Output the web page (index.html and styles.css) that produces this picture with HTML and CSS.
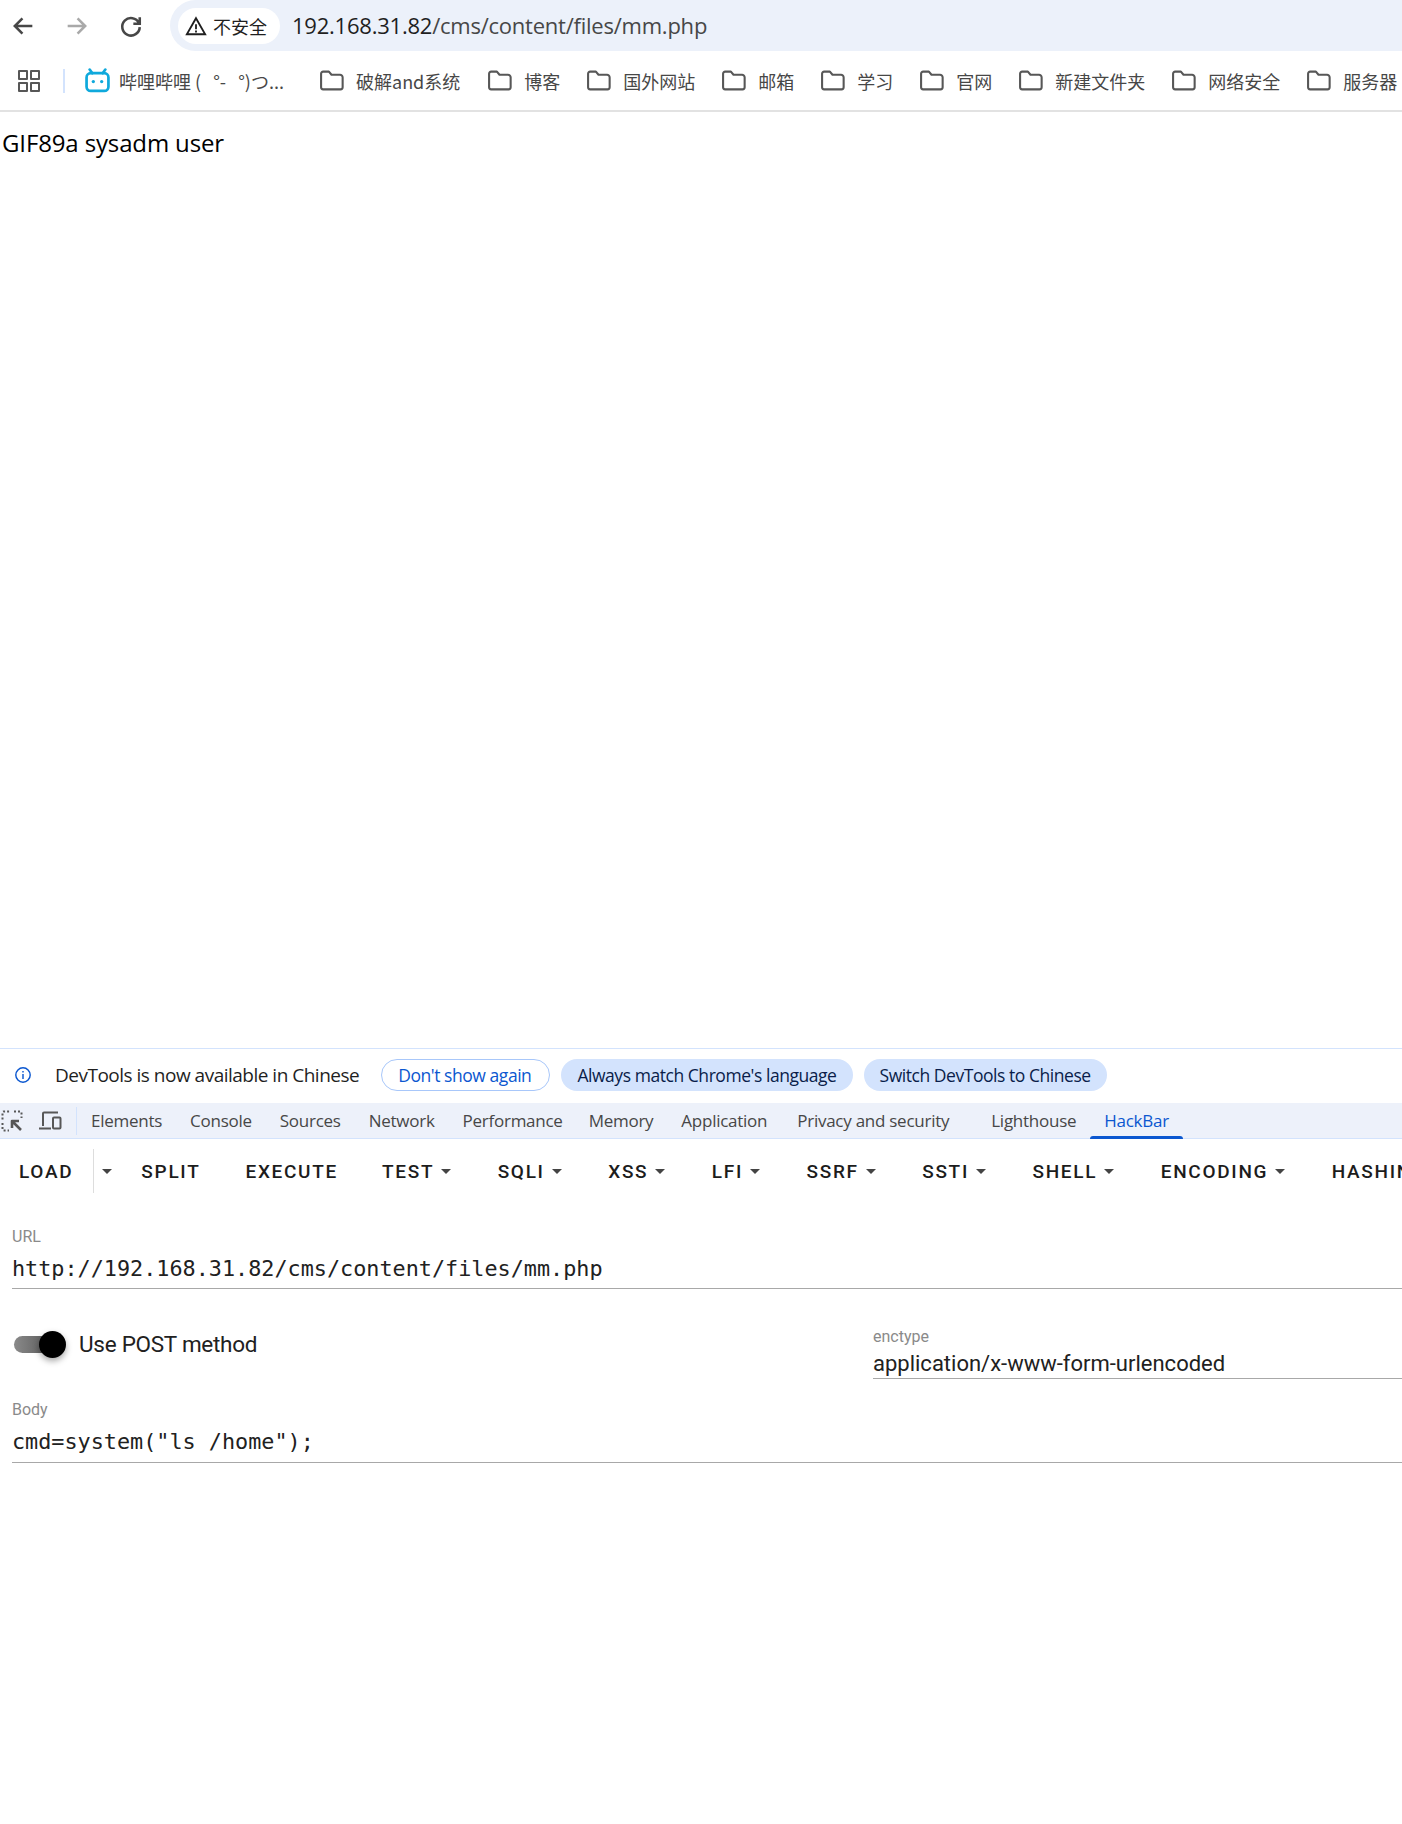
FILE: index.html
```html
<!DOCTYPE html>
<html lang="zh-CN">
<head>
<meta charset="utf-8">
<title>mm.php</title>
<link rel="stylesheet" href="styles.css">
</head>
<body>
<div class="browser">
  <header class="toolbar">
    <div class="nav">
      <svg class="nav-icon" viewBox="0 0 24 24"><path d="M20 12H5M11.5 5.5 5 12l6.500 6.500" class="st dark"/></svg>
      <svg class="nav-icon" viewBox="0 0 24 24"><path d="M4 12h15M12.500 5.500 19 12l-6.500 6.500" class="st light"/></svg>
      <svg class="nav-icon" viewBox="0 0 24 24"><path d="M18.800 9.500A7.500 7.500 0 1 0 19.500 13M19.500 4.500v5.500H14" class="st dark"/></svg>
    </div>
    <div class="omnibox">
      <div class="chip">
        <svg class="warn" viewBox="0 0 24 24"><path d="M12 3.500 22 21H2Z" class="st black"/><path d="M12 10v5.500M12 17v2" class="st black"/></svg>
        <span>不安全</span>
      </div>
      <span class="url"><b>192.168.31.82</b>/cms/content/files/mm.php</span>
    </div>
  </header>

  <nav class="bookmarks">
    <svg class="apps" viewBox="0 0 22 22"><path d="M1 1h8v8H1zM13 1h8v8h-8zM1 13h8v8H1zM13 13h8v8h-8z" class="st grey"/></svg>
    <i class="bm-sep"></i>
    <div class="bm bm-first">
      <svg class="bili" viewBox="0 0 24 24"><path d="M7 5 4.500 1.500M17 5l2.500-3.500" class="st blue"/><rect x="1.500" y="5" width="21" height="17" rx="4" class="st blue"/><circle cx="8" cy="13" r="1.600" class="dot"/><circle cx="16" cy="13" r="1.600" class="dot"/></svg>
      <span>哔哩哔哩 (&nbsp;&nbsp;&nbsp;°-&nbsp;&nbsp;&nbsp;°)つ...</span>
    </div>
    <div class="bm bm-wide"><svg class="folder" viewBox="0 0 24 20"><path d="M2 3.500A2 2 0 0 1 4 1.500h5.500l2.500 3h8A2.500 2.500 0 0 1 22.700 7v9.500A2 2 0 0 1 20.700 18.500H4A2 2 0 0 1 2 16.500Z" class="st grey"/></svg><span>破解and系统</span></div>
    <div class="bm"><svg class="folder" viewBox="0 0 24 20"><path d="M2 3.500A2 2 0 0 1 4 1.500h5.500l2.500 3h8A2.500 2.500 0 0 1 22.700 7v9.500A2 2 0 0 1 20.700 18.500H4A2 2 0 0 1 2 16.500Z" class="st grey"/></svg><span>博客</span></div>
    <div class="bm"><svg class="folder" viewBox="0 0 24 20"><path d="M2 3.500A2 2 0 0 1 4 1.500h5.500l2.500 3h8A2.500 2.500 0 0 1 22.700 7v9.500A2 2 0 0 1 20.700 18.500H4A2 2 0 0 1 2 16.500Z" class="st grey"/></svg><span>国外网站</span></div>
    <div class="bm"><svg class="folder" viewBox="0 0 24 20"><path d="M2 3.500A2 2 0 0 1 4 1.500h5.500l2.500 3h8A2.500 2.500 0 0 1 22.700 7v9.500A2 2 0 0 1 20.700 18.500H4A2 2 0 0 1 2 16.500Z" class="st grey"/></svg><span>邮箱</span></div>
    <div class="bm"><svg class="folder" viewBox="0 0 24 20"><path d="M2 3.500A2 2 0 0 1 4 1.500h5.500l2.500 3h8A2.500 2.500 0 0 1 22.700 7v9.500A2 2 0 0 1 20.700 18.500H4A2 2 0 0 1 2 16.500Z" class="st grey"/></svg><span>学习</span></div>
    <div class="bm"><svg class="folder" viewBox="0 0 24 20"><path d="M2 3.500A2 2 0 0 1 4 1.500h5.500l2.500 3h8A2.500 2.500 0 0 1 22.700 7v9.500A2 2 0 0 1 20.700 18.500H4A2 2 0 0 1 2 16.500Z" class="st grey"/></svg><span>官网</span></div>
    <div class="bm"><svg class="folder" viewBox="0 0 24 20"><path d="M2 3.500A2 2 0 0 1 4 1.500h5.500l2.500 3h8A2.500 2.500 0 0 1 22.700 7v9.500A2 2 0 0 1 20.700 18.500H4A2 2 0 0 1 2 16.500Z" class="st grey"/></svg><span>新建文件夹</span></div>
    <div class="bm"><svg class="folder" viewBox="0 0 24 20"><path d="M2 3.500A2 2 0 0 1 4 1.500h5.500l2.500 3h8A2.500 2.500 0 0 1 22.700 7v9.500A2 2 0 0 1 20.700 18.500H4A2 2 0 0 1 2 16.500Z" class="st grey"/></svg><span>网络安全</span></div>
    <div class="bm"><svg class="folder" viewBox="0 0 24 20"><path d="M2 3.500A2 2 0 0 1 4 1.500h5.500l2.500 3h8A2.500 2.500 0 0 1 22.700 7v9.500A2 2 0 0 1 20.700 18.500H4A2 2 0 0 1 2 16.500Z" class="st grey"/></svg><span>服务器</span></div>
  </nav>

  <main class="page">GIF89a sysadm user</main>

  <section class="devtools">
    <div class="infobar">
      <svg class="info" viewBox="0 0 20 20"><circle cx="10" cy="10" r="8" class="st bluei"/><path d="M10 9v5.500M10 5.500v1.800" class="st bluei"/></svg>
      <span class="info-text">DevTools is now available in Chinese</span>
      <button class="pill pill-outline">Don't show again</button>
      <button class="pill">Always match Chrome's language</button>
      <button class="pill">Switch DevTools to Chinese</button>
    </div>

    <div class="tabbar">
      <svg class="dt-icon inspect" viewBox="0 0 22 22"><path d="M1.500 9.500V2.500a1 1 0 0 1 1-1h7" class="st grey dash"/><path d="M1.500 13v6.500a1 1 0 0 0 1 1H8M13 1.500h6.500a1 1 0 0 1 1 1V8" class="st grey dash"/><path d="M20 20 11 11M11 18v-7h7" class="st grey thick"/></svg>
      <svg class="dt-icon device" viewBox="0 0 24 22"><path d="M5 16V3.500a1 1 0 0 1 1-1h14M1 18.500h12" class="st grey"/><rect x="15" y="7.500" width="7.500" height="11" rx="1" class="st grey"/></svg>
      <i class="tab-sep"></i>
      <span class="tab">Elements</span>
      <span class="tab">Console</span>
      <span class="tab">Sources</span>
      <span class="tab">Network</span>
      <span class="tab tab-perf">Performance</span>
      <span class="tab">Memory</span>
      <span class="tab tab-app">Application</span>
      <span class="tab tab-privacy">Privacy and security</span>
      <span class="tab">Lighthouse</span>
      <span class="tab tab-active">HackBar</span>
    </div>

    <div class="hackbar">
      <div class="actions">
        <span class="act act-load">LOAD</span>
        <span class="act-split"><i class="caret"></i></span>
        <span class="act act-s">SPLIT</span>
        <span class="act act-exec">EXECUTE</span>
        <span class="act">TEST<i class="caret"></i></span>
        <span class="act">SQLI<i class="caret"></i></span>
        <span class="act">XSS<i class="caret"></i></span>
        <span class="act">LFI<i class="caret"></i></span>
        <span class="act">SSRF<i class="caret"></i></span>
        <span class="act">SSTI<i class="caret"></i></span>
        <span class="act">SHELL<i class="caret"></i></span>
        <span class="act">ENCODING<i class="caret"></i></span>
        <span class="act">HASHING<i class="caret"></i></span>
      </div>

      <div class="field field-url">
        <label class="flabel">URL</label>
        <div class="fvalue mono">http://192.168.31.82/cms/content/files/mm.php</div>
      </div>

      <div class="options">
        <div class="switch">
          <span class="track"><span class="knob"></span></span>
          <span class="switch-label">Use POST method</span>
        </div>
        <div class="field field-enc">
          <label class="flabel">enctype</label>
          <div class="fvalue sans">application/x-www-form-urlencoded</div>
        </div>
      </div>

      <div class="field field-body">
        <label class="flabel">Body</label>
        <div class="fvalue mono">cmd=system("ls /home");</div>
      </div>
    </div>
  </section>
</div>
</body>
</html>
```
FILE: styles.css
```css
* { box-sizing: border-box; }
html, body { margin: 0; padding: 0; background: #fff; }
body { width: 1402px; height: 1824px; overflow: hidden; }
.browser { display: flex; flex-direction: column; width: 1402px; height: 1824px; font-family: "Open Sans", "Noto Sans CJK SC", sans-serif; color: #111; }

.st { fill: none; stroke-width: 2; stroke-linecap: butt; stroke-linejoin: miter; }
.dark { stroke: #474747; stroke-width: 2.2; }
.light { stroke: #a9a9a9; stroke-width: 2.2; }
.black { stroke: #1f1f1f; stroke-width: 2; }
.grey { stroke: #575757; stroke-linejoin: round; }
.blue { stroke: #0fa9dc; stroke-width: 2.600; stroke-linecap: round; }
.bluei { stroke: #0b57d0; stroke-width: 1.600; }
.dot { fill: #0fa9dc; }
.dash { stroke-dasharray: 2 2; stroke-width: 2; }
.thick { stroke-width: 2.600; }

.toolbar { display: flex; height: 51px; flex: none; }
.nav { display: flex; align-items: center; gap: 26px; padding: 0 0 0 9px; width: 170px; flex: none; }
.nav-icon { width: 28px; height: 28px; flex: none; }
.omnibox { flex: 1; display: flex; align-items: center; background: #ecf1fa; border-radius: 26px 0 0 26px; padding: 0 0 0 8px; }
.chip { display: flex; align-items: center; height: 36px; width: 102px; background: #fff; border-radius: 18px; padding-left: 7px; gap: 6px; font: 18px "Noto Sans CJK SC", sans-serif; color: #1f1f1f; }
.warn { width: 22px; height: 22px; flex: none; }
.url { margin: 0 0 2px 12px; font: 22px "Open Sans", sans-serif; letter-spacing: -0.23px; color: #474747; }
.url b { font-weight: 400; color: #1f1f1f; }

.bookmarks { display: flex; align-items: center; height: 61px; flex: none; border-bottom: 2px solid #e2e2e2; padding-left: 18px; white-space: nowrap; overflow: hidden; }
.apps { width: 22px; height: 22px; flex: none; }
.bm-sep { width: 2px; height: 24px; background: #d3e3fd; margin: 0 20px 0 23px; flex: none; }
.bm { display: flex; align-items: center; margin-left: 26px; gap: 12px; font: 18px "Noto Sans CJK SC", sans-serif; color: #474747; flex: none; }
.bm-first { margin-left: 0; width: 208px; gap: 9px; }
.bm-wide { margin-right: 1px; }
.bili { width: 25px; height: 25px; flex: none; }
.folder { width: 25px; height: 21px; flex: none; }

.page { flex: 1; padding: 15px 0 0 2px; font-size: 24px; line-height: 32px; letter-spacing: -0.13px; color: #000; }

.devtools { flex: none; height: 776px; display: flex; flex-direction: column; }
.infobar { display: flex; align-items: center; height: 55px; flex: none; border-top: 1px solid #d3e3fd; padding: 0 0 3px 14px; white-space: nowrap; }
.info { width: 18px; height: 18px; margin-right: 23px; flex: none; }
.info-text { font-size: 19px; letter-spacing: -0.5px; color: #1f1f1f; margin-right: 22px; }
.pill { height: 32px; padding: 0 16px; border-radius: 16px; border: 0; background: #d3e3fd; color: #0a1d4a; font: 17.500px "Open Sans", sans-serif; letter-spacing: -0.45px; margin-right: 11px; white-space: nowrap; }
.pill-outline { background: #fff; border: 1px solid #a8c7fa; color: #0b57d0; padding: 0 18px 0 16px; }

.tabbar { display: flex; align-items: stretch; height: 36px; flex: none; background: #edf1fa; border-bottom: 1px solid #d3e3fd; white-space: nowrap; }
.dt-icon { flex: none; align-self: center; }
.inspect { width: 22px; height: 22px; margin-left: 1px; }
.device { width: 24px; height: 22px; margin-left: 15px; }
.tab-sep { width: 1px; height: 28px; background: #d3e3fd; align-self: center; margin: 0 0 0 14px; flex: none; }
.tab { display: flex; align-items: center; padding: 0 14px; font-size: 17px; letter-spacing: -0.26px; color: #474747; }
.tab-perf { padding-right: 12px; }
.tab-app { padding-right: 16px; }
.tab-privacy { margin-right: 14px; }
.tab-active { color: #0b57d0; position: relative; }
.tab-active::after { content: ""; position: absolute; left: 0; right: 0; bottom: -1px; height: 3px; background: #0b57d0; border-radius: 3px 3px 0 0; }

.hackbar { flex: 1; overflow: hidden; font-family: Roboto, sans-serif; }
.actions { display: flex; align-items: center; height: 64px; white-space: nowrap; padding-left: 3px; }
.act { display: flex; align-items: center; padding: 0 16px; font-size: 19px; font-weight: 500; letter-spacing: 1.700px; color: #1c1c1c; flex: none; height: 44px; margin-right: 14.200px; }
.act-load { margin-right: 0; padding-right: 20px; }
.act-split { display: flex; align-items: center; padding: 0 8px; height: 44px; border-left: 1px solid #ddd; margin-right: 5px; }
.act-s { margin-right: 13px; }
.act-exec { margin-right: 12px; }
.caret { display: inline-block; width: 0; height: 0; margin-left: 7px; margin-right: 0.300px; border-left: 5.500px solid transparent; border-right: 5.500px solid transparent; border-top: 5.500px solid #444; }
.act-split .caret { margin: 0; }

.field { border-bottom: 1px solid #a8a8a8; }
.flabel { display: block; font-size: 16px; line-height: 18px; color: #8a8a8a; }
.fvalue { color: #212121; white-space: nowrap; }
.mono { font-family: "DejaVu Sans Mono", monospace; font-size: 21.800px; line-height: 30px; }
.sans { font-size: 22px; line-height: 28px; }
.field-url { margin: 25px 0 0 12px; height: 61px; padding-top: 0; }
.field-url .fvalue { margin-top: 8px; }
.options { display: flex; align-items: flex-start; height: 90px; margin-left: 12px; }
.switch { display: flex; align-items: center; width: 861px; height: 30px; margin-top: 40px; flex: none; }
.track { position: relative; display: block; width: 40px; height: 17px; border-radius: 9px; margin-left: 2px; background: linear-gradient(90deg, #8a8a8a, #555); flex: none; }
.knob { position: absolute; right: -12px; top: -5px; width: 27px; height: 27px; border-radius: 50%; background: #000; box-shadow: 0 3px 6px rgba(0,0,0,.35); }
.switch-label { margin-left: 25px; font-size: 22.500px; letter-spacing: -0.27px; color: #212121; }
.field-enc { flex: 1; margin-top: 39px; height: 51px; }
.field-enc .fvalue { margin-top: 4px; }
.field-body { margin: 22px 0 0 12px; height: 62px; }
.field-body .fvalue { margin-top: 8px; }
```
